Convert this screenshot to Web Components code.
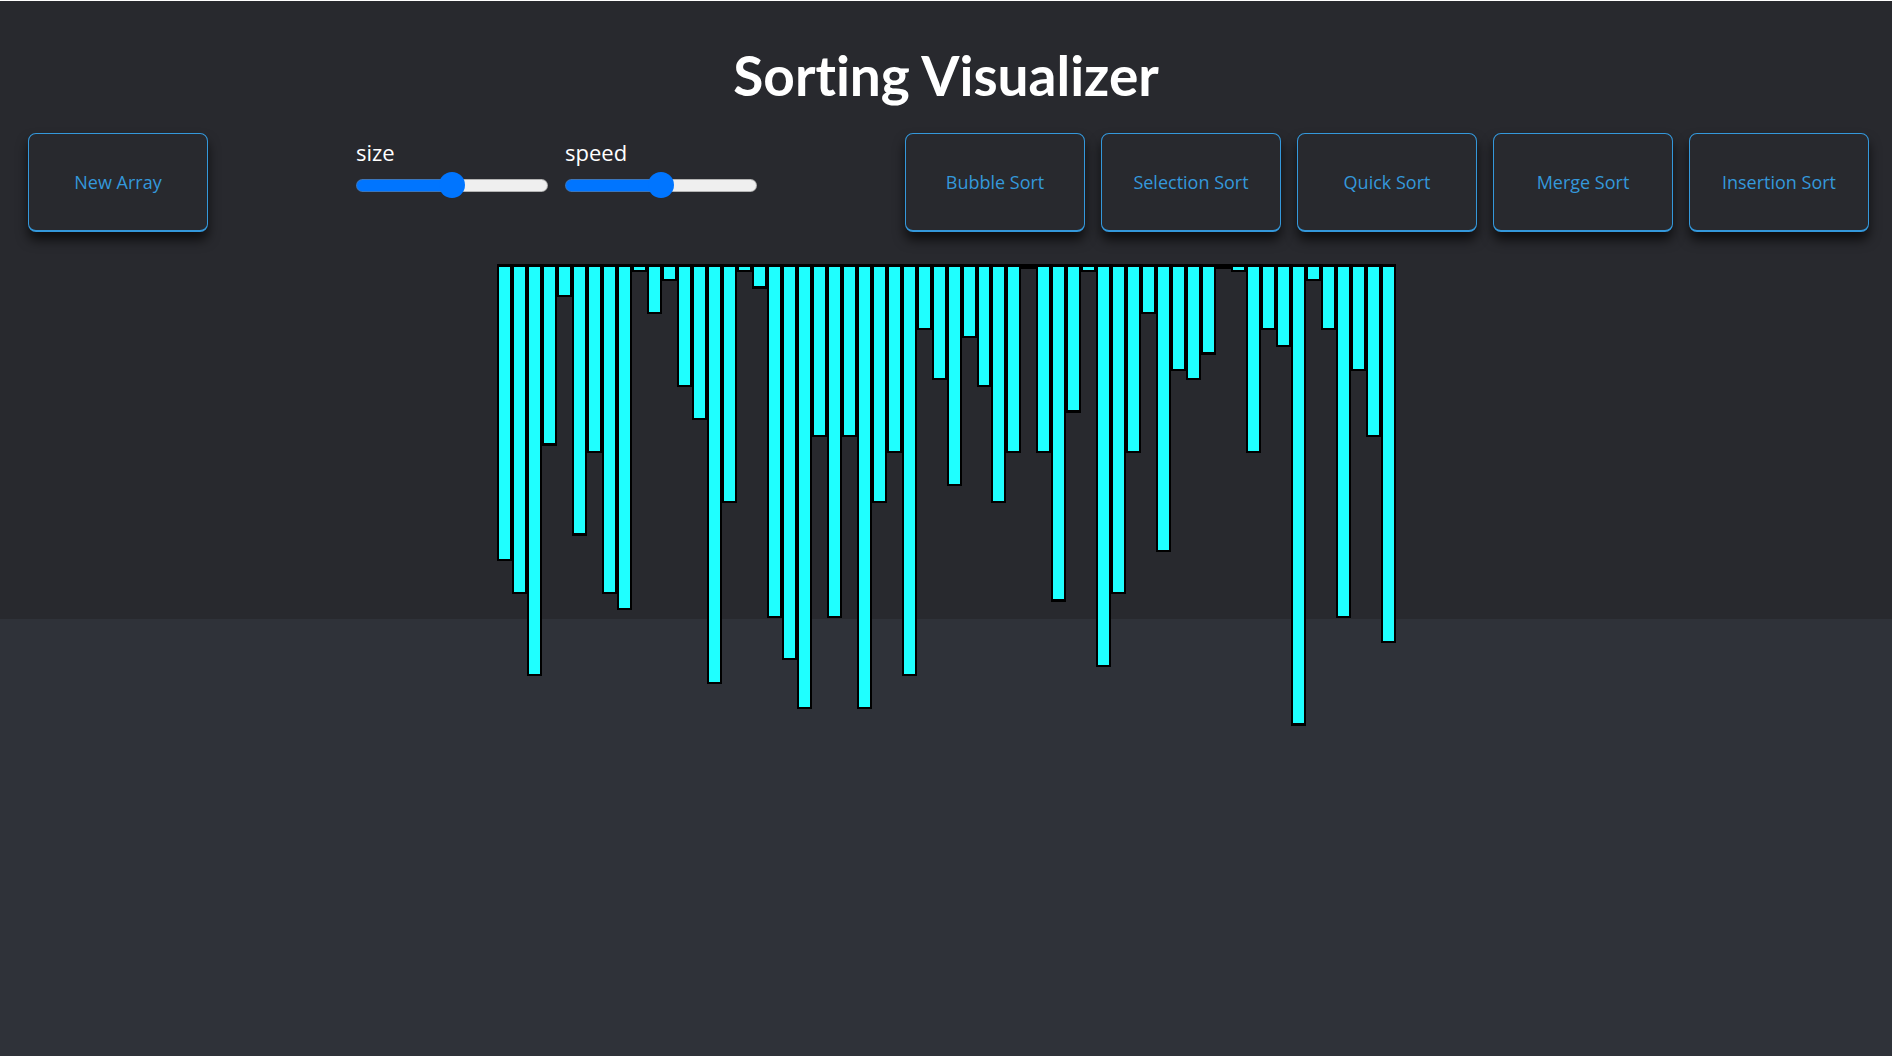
<!DOCTYPE html>
<html lang="en">
<head>
<meta charset="utf-8">
<title>Sorting Visualizer</title>
<style>
  html { background: #2f3239; }
  body { margin: 0; min-height: 100vh; font-family: "Open Sans", "Noto Sans", sans-serif; color: #fff; }
</style>
</head>
<body>
<sorting-visualizer></sorting-visualizer>

<template id="app-template">
  <style>
    :host { display: block; min-height: 100vh; }
    .panel { background: #28292e; border-top: 1px solid #fff; }
    h1 { margin: 0; padding-top: 34px; font-family: "Lato", sans-serif; font-size: 55px; line-height: 80px; font-weight: 700; font-variant-ligatures: none; text-align: center; }
    .toolbar { display: flex; align-items: flex-start; padding: 18px 23px 0 28px; }
    .sliders { display: flex; gap: 17px; margin-left: 148px; }
    .sorts { display: flex; gap: 16px; margin-left: auto; }
    bar-chart { margin-top: 32px; }
  </style>
  <main class="panel">
    <h1>Sorting Visualizer</h1>
    <div class="toolbar">
      <action-button>New Array</action-button>
      <div class="sliders">
        <range-field label="size"></range-field>
        <range-field label="speed"></range-field>
      </div>
      <div class="sorts">
        <action-button>Bubble Sort</action-button>
        <action-button>Selection Sort</action-button>
        <action-button>Quick Sort</action-button>
        <action-button>Merge Sort</action-button>
        <action-button>Insertion Sort</action-button>
      </div>
    </div>
    <bar-chart></bar-chart>
  </main>
</template>

<template id="button-template">
  <style>
    :host { display: block; }
    button {
      display: block; box-sizing: border-box; width: 180px; height: 99px; padding: 0;
      font: inherit; font-size: 18px; color: #3498db; background: #28292e;
      border: 1px solid #3498db; border-bottom-width: 2px; border-radius: 8px;
      box-shadow: 0 8px 12px rgba(0, 0, 0, .65); cursor: pointer;
    }
  </style>
  <button type="button"><slot></slot></button>
</template>

<template id="range-template">
  <style>
    :host { display: block; }
    label { display: block; padding-top: 2px; font-size: 22px; line-height: 34px; }
    input {
      -webkit-appearance: none; appearance: none; display: block;
      width: 192px; height: 26px; margin: 3px 0 0; background: transparent;
    }
    input::-webkit-slider-runnable-track {
      box-sizing: border-box; height: 13px; border: 1px solid rgba(120, 120, 120, .5); border-radius: 7px;
      background: linear-gradient(to right, #0075ff 50%, #efefef 50%);
      background-origin: border-box;
    }
    input::-webkit-slider-thumb {
      -webkit-appearance: none; width: 26px; height: 26px; margin-top: -8px;
      border-radius: 50%; background: #0075ff;
    }
  </style>
  <label for="range"></label>
  <input id="range" type="range" min="0" max="100" value="50">
</template>

<template id="chart-template">
  <style>
    :host { display: block; height: 355px; padding-left: 1px; }
    .bars { display: flex; align-items: flex-start; max-width: 899px; margin: 0 auto; }
    .bar {
      flex: 1 1 0; min-width: 0; box-sizing: border-box;
      background: #1fffff; border: 2px solid #000; border-top-width: 3px;
    }
    .bar.thick { border-bottom-width: 3px; }
  </style>
  <div class="bars"></div>
</template>

<script>
  const stamp = (host, id) => {
    const root = host.attachShadow({ mode: "open" });
    root.append(document.getElementById(id).content.cloneNode(true));
    return root;
  };

  customElements.define("action-button", class extends HTMLElement {
    constructor() { super(); stamp(this, "button-template"); }
  });

  customElements.define("range-field", class extends HTMLElement {
    connectedCallback() {
      if (this.shadowRoot) return;
      const root = stamp(this, "range-template");
      root.querySelector("label").textContent = this.getAttribute("label");
    }
  });

  const heights = [
    297, 330, 412, 182, 33, 272, 189, 330, 346, 8, 50, 17, 123, 156, 420,
    239, 8, 25, 354, 396, 445, 173, 354, 173, 445, 239, 189, 412, 66, 116,
    222, 74, 123, 239, 189, 5, 189, 338, 149, 8, 403, 330, 189, 50, 288,
    107, 116, 91, 5, 8, 189, 66, 83, 462, 17, 66, 354, 107, 173, 379
  ];
  const thick = new Set([182, 272, 25, 338, 149, 91, 462]);

  customElements.define("bar-chart", class extends HTMLElement {
    connectedCallback() {
      if (this.shadowRoot) return;
      const bars = stamp(this, "chart-template").querySelector(".bars");
      for (const h of heights) {
        const bar = document.createElement("div");
        bar.className = thick.has(h) ? "bar thick" : "bar";
        bar.style.height = h + "px";
        bars.append(bar);
      }
    }
  });

  customElements.define("sorting-visualizer", class extends HTMLElement {
    constructor() { super(); stamp(this, "app-template"); }
  });
</script>
</body>
</html>
